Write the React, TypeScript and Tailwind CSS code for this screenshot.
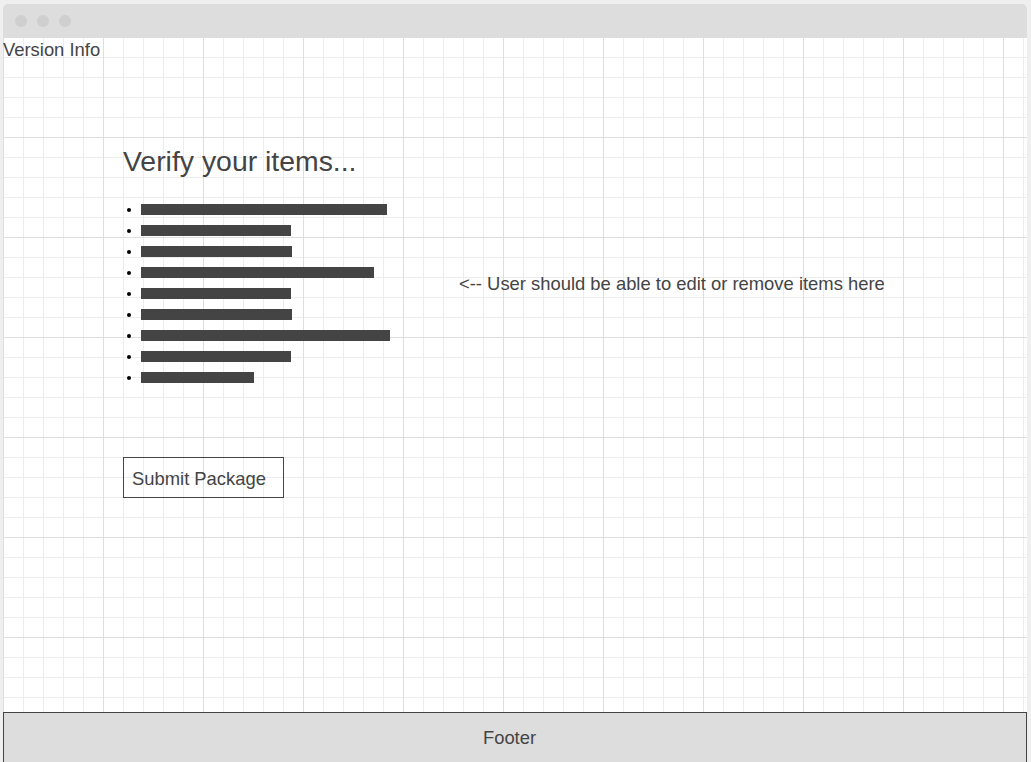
import React from "react";

const bars = [246, 150, 151, 233, 150, 151, 249, 150, 113];

export default function App() {
  return (
    <div className="w-[1031px] h-[762px] bg-[#efefef] overflow-hidden pt-[4px] pl-[3px] pr-[4px] font-['Liberation_Sans',Arial,sans-serif] text-[#444444]">
      <div className="flex flex-col h-[758px]">
        <div className="h-[33px] shrink-0 bg-[#dddddd] rounded-t-[5px] flex items-center gap-[10px] pl-[12px]">
          <span className="w-[12px] h-[12px] rounded-full bg-[#cfcfcf]" />
          <span className="w-[12px] h-[12px] rounded-full bg-[#cfcfcf]" />
          <span className="w-[12px] h-[12px] rounded-full bg-[#cfcfcf]" />
        </div>
        <div className="flex-1 flex flex-col bg-white bg-[image:linear-gradient(to_right,#dedede_1px,transparent_1px),linear-gradient(to_bottom,#dedede_1px,transparent_1px),linear-gradient(to_right,#ededed_1px,transparent_1px),linear-gradient(to_bottom,#ededed_1px,transparent_1px)] bg-[size:100px_100px,100px_100px,20px_20px,20px_20px]">
          <div className="text-[18.4px] leading-[21px] pt-[2px]">Version Info</div>
          <div className="flex pl-[120px] mt-[83px]">
            <div className="w-[336px] flex flex-col items-start">
              <h1 className="text-[28.4px] leading-[34px] font-normal pt-[1px]">Verify your items...</h1>
              <ul className="mt-[21px] flex flex-col">
                {bars.map((w, i) => (
                  <li key={i} className="h-[21px] flex items-center">
                    <span className="w-[4px] h-[4px] rounded-full bg-black ml-[4px] mr-[10px]" />
                    <span className="h-[11px] bg-[#444444]" style={{ width: w }} />
                  </li>
                ))}
              </ul>
              <button className="mt-[69px] h-[41px] w-[161px] border border-[#444444] text-left pl-[8px] pt-[1px] text-[18.4px] leading-[21px] bg-transparent">
                Submit Package
              </button>
            </div>
            <p className="mt-[130px] text-[18.4px] leading-[21px]">
              &lt;-- User should be able to edit or remove items here
            </p>
          </div>
        </div>
        <div className="h-[50px] shrink-0 bg-[#dddddd] border border-b-0 border-[#444444] flex items-center justify-center pr-[11px] text-[18.4px] leading-[21px]">
          Footer
        </div>
      </div>
    </div>
  );
}
